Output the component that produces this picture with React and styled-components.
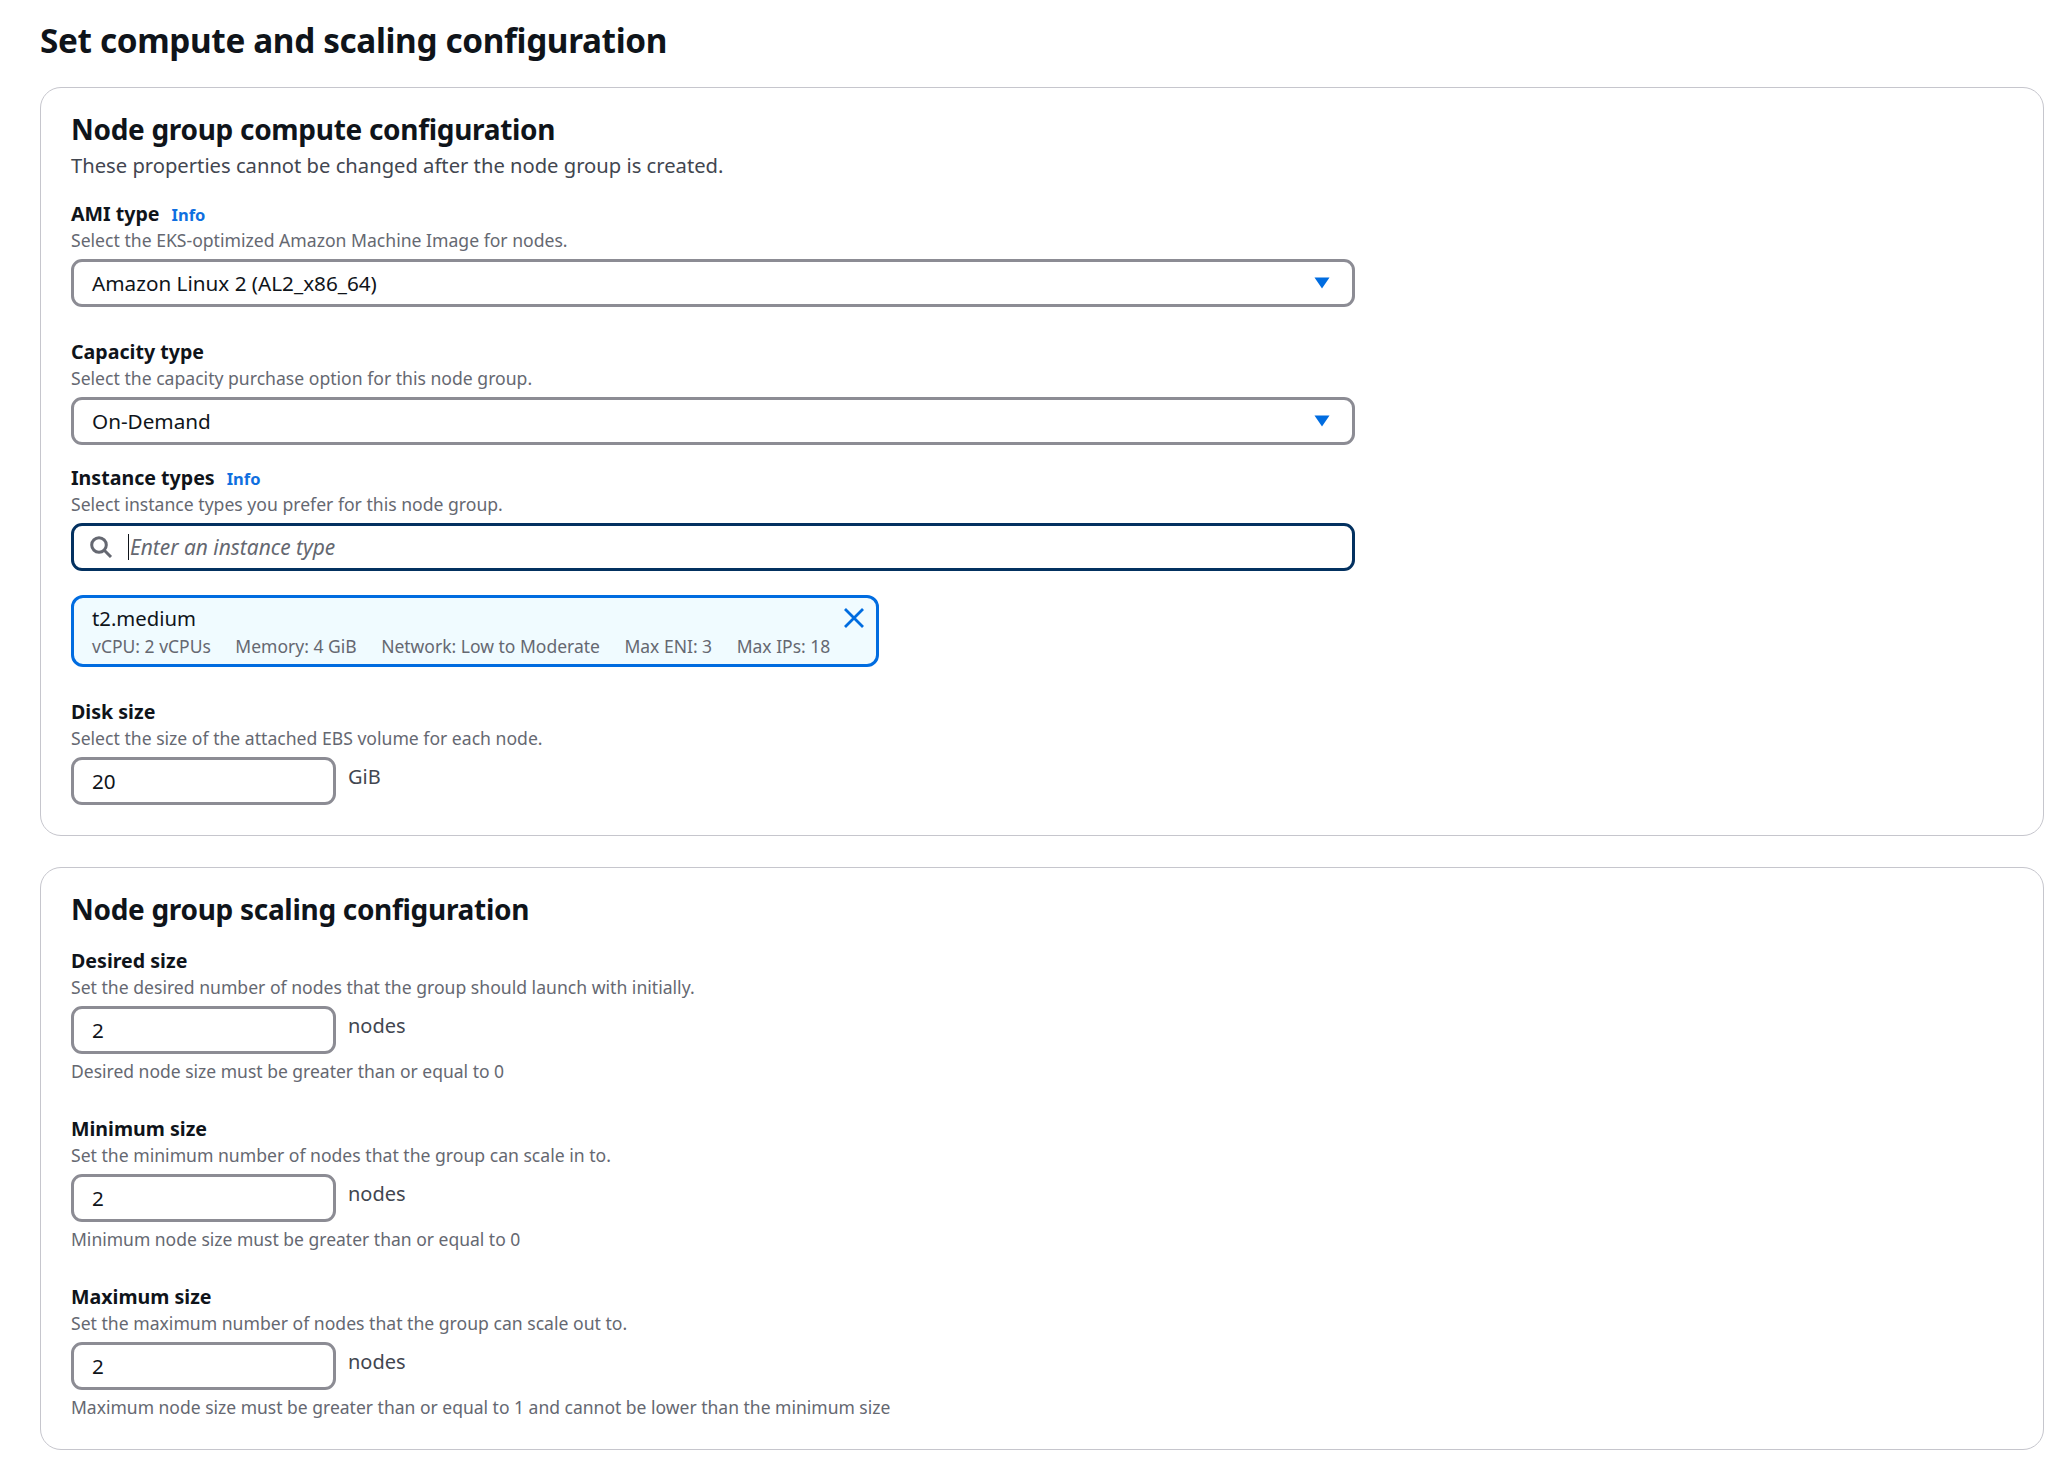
import React from 'react'
import styled, { createGlobalStyle } from 'styled-components'

const GlobalStyle = createGlobalStyle`
  body {
    margin: 0;
    background: #fff;
    color: #0f141a;
    font-family: "Noto Sans", "Open Sans", Arial, sans-serif;
  }
  * { box-sizing: border-box; }
`

const Page = styled.div`
  padding: 20px 24px 11px 40px;
`
const Title = styled.h1`
  margin: 0 0 25px;
  font-size: 33.3px;
  line-height: 41px;
  font-weight: 700;
  letter-spacing: -0.35px;
`
const Card = styled.section`
  border: 1px solid #c6c6cd;
  border-radius: 21px;
  padding: 24px 30px 30px;
  margin-top: 31px;
  &:first-of-type { margin-top: 26px; }
`
const CardTitle = styled.h2`
  margin: -1px 0 0;
  padding-bottom: 1px;
  font-size: 28px;
  line-height: 36px;
  font-weight: 700;
  letter-spacing: -0.3px;
`
const CardSub = styled.p`
  margin: 3px 0 0;
  font-size: 20.2px;
  line-height: 28px;
  color: #424650;
`
const Field = styled.div`
  margin-top: ${p => p.$gap}px;
`
const LabelRow = styled.div`
  display: flex;
  align-items: baseline;
  gap: 12px;
  height: 26px;
`
const Label = styled.label`
  font-size: 19.6px;
  line-height: 26px;
  font-weight: 700;
`
const InfoLink = styled.a`
  font-size: 16.5px;
  line-height: 26px;
  font-weight: 700;
  color: #0f6fe0;
`
const Desc = styled.div`
  margin-top: 1px;
  font-size: 17.6px;
  line-height: 24px;
  color: #656871;
`
const Box = styled.div`
  display: flex;
  align-items: center;
  height: 48px;
  margin-top: 7px;
  padding: 0 18px 1px;
  background: #fff;
  border: 3px solid ${p => (p.$focused ? '#033160' : '#8c8c94')};
  border-radius: 11px;
  font-size: 20.7px;
  color: #0f141a;
`
const SelectBox = styled(Box)`
  width: 1284px;
  justify-content: space-between;
  padding-right: 22px;
`
const SearchBox = styled(Box)`
  width: 1284px;
  padding: 0 0 0 16px;
  gap: 15px;
`
const Caret = styled.span`
  display: block;
  width: 1px;
  height: 26px;
  margin-right: -14px;
  background: #0f141a;
`
const Placeholder = styled.span`
  font-size: 20.9px;
  font-style: italic;
  color: #656871;
`
const Tile = styled.div`
  position: relative;
  width: 808px;
  height: 72px;
  margin-top: 24px;
  padding: 6px 18px;
  background: #f0fbff;
  border: 3px solid #006ce0;
  border-radius: 12px;
`
const TileName = styled.div`
  font-size: 20.3px;
  line-height: 28px;
`
const TileMeta = styled.div`
  display: flex;
  gap: 24.5px;
  margin-top: 2px;
  font-size: 17.5px;
  line-height: 24px;
  color: #656871;
`
const RemoveButton = styled.button`
  position: absolute;
  top: 8px;
  right: 10px;
  display: flex;
  padding: 0;
  border: 0;
  background: none;
  cursor: pointer;
`
const SizeRow = styled.div`
  display: flex;
  gap: 12px;
`
const SizeBox = styled(Box)`
  width: 265px;
`
const Unit = styled.span`
  margin-top: 9px;
  font-size: 20px;
  line-height: 36px;
  color: #424650;
`
const Hint = styled.div`
  margin-top: 5px;
  font-size: 17.5px;
  line-height: 24px;
  color: #656871;
`

const Arrow = () => (
  <svg width="16" height="12" viewBox="0 0 16 12">
    <path d="M0.5 0.5H15.5L8 11.5Z" fill="#006ce0" />
  </svg>
)

const SearchIcon = () => (
  <svg width="23" height="22" viewBox="0 0 23 22" fill="none" stroke="#656871" strokeWidth="3">
    <circle cx="9" cy="9" r="7.3" />
    <path d="M14.5 14.5l6.5 6.5" />
  </svg>
)

const CloseIcon = () => (
  <svg width="24" height="24" viewBox="0 0 24 24" fill="none" stroke="#006ce0" strokeWidth="2.8">
    <path d="M3 3l18 18M21 3L3 21" />
  </svg>
)

function Head({ label, info, desc }) {
  return (
    <>
      <LabelRow>
        <Label>{label}</Label>
        {info && <InfoLink>Info</InfoLink>}
      </LabelRow>
      <Desc>{desc}</Desc>
    </>
  )
}

function SizeField({ gap, label, desc, value, unit, hint }) {
  return (
    <Field $gap={gap}>
      <Head label={label} desc={desc} />
      <SizeRow>
        <SizeBox>{value}</SizeBox>
        <Unit>{unit}</Unit>
      </SizeRow>
      {hint && <Hint>{hint}</Hint>}
    </Field>
  )
}

export default function App() {
  return (
    <Page>
      <GlobalStyle />
      <Title>Set compute and scaling configuration</Title>
      <Card>
        <CardTitle>Node group compute configuration</CardTitle>
        <CardSub>These properties cannot be changed after the node group is created.</CardSub>
        <Field $gap={22}>
          <Head label="AMI type" info desc="Select the EKS-optimized Amazon Machine Image for nodes." />
          <SelectBox>
            Amazon Linux 2 (AL2_x86_64)
            <Arrow />
          </SelectBox>
        </Field>
        <Field $gap={32}>
          <Head label="Capacity type" desc="Select the capacity purchase option for this node group." />
          <SelectBox>
            On-Demand
            <Arrow />
          </SelectBox>
        </Field>
        <Field $gap={20}>
          <Head label="Instance types" info desc="Select instance types you prefer for this node group." />
          <SearchBox $focused>
            <SearchIcon />
            <Caret />
            <Placeholder>Enter an instance type</Placeholder>
          </SearchBox>
          <Tile>
            <TileName>t2.medium</TileName>
            <TileMeta>
              <span>vCPU: 2 vCPUs</span>
              <span>Memory: 4 GiB</span>
              <span>Network: Low to Moderate</span>
              <span>Max ENI: 3</span>
              <span>Max IPs: 18</span>
            </TileMeta>
            <RemoveButton>
              <CloseIcon />
            </RemoveButton>
          </Tile>
        </Field>
        <SizeField
          gap={32}
          label="Disk size"
          desc="Select the size of the attached EBS volume for each node."
          value="20"
          unit="GiB"
        />
      </Card>
      <Card>
        <CardTitle>Node group scaling configuration</CardTitle>
        <SizeField
          gap={20}
          label="Desired size"
          desc="Set the desired number of nodes that the group should launch with initially."
          value="2"
          unit="nodes"
          hint="Desired node size must be greater than or equal to 0"
        />
        <SizeField
          gap={33}
          label="Minimum size"
          desc="Set the minimum number of nodes that the group can scale in to."
          value="2"
          unit="nodes"
          hint="Minimum node size must be greater than or equal to 0"
        />
        <SizeField
          gap={33}
          label="Maximum size"
          desc="Set the maximum number of nodes that the group can scale out to."
          value="2"
          unit="nodes"
          hint="Maximum node size must be greater than or equal to 1 and cannot be lower than the minimum size"
        />
      </Card>
    </Page>
  )
}
